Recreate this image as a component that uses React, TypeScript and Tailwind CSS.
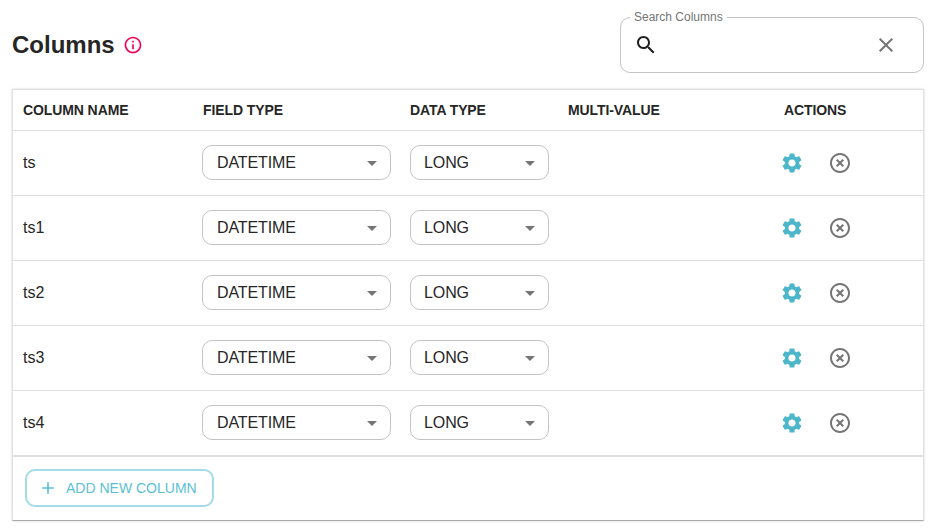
import React from "react";

const settingsPath = "M19.14 12.94c.04-.3.06-.61.06-.94 0-.32-.02-.64-.07-.94l2.03-1.58c.18-.14.23-.41.12-.61l-1.92-3.32c-.12-.22-.37-.29-.59-.22l-2.39.96c-.5-.38-1.03-.7-1.62-.94l-.36-2.54c-.04-.24-.24-.41-.48-.41h-3.84c-.24 0-.43.17-.47.41l-.36 2.54c-.59.24-1.13.57-1.62.94l-2.39-.96c-.22-.08-.47 0-.59.22L2.74 8.87c-.12.21-.08.47.12.61l2.03 1.58c-.05.3-.09.63-.09.94s.02.64.07.94l-2.03 1.58c-.18.14-.23.41-.12.61l1.92 3.32c.12.22.37.29.59.22l2.39-.96c.5.38 1.03.7 1.62.94l.36 2.54c.05.24.24.41.48.41h3.84c.24 0 .44-.17.47-.41l.36-2.54c.59-.24 1.13-.56 1.62-.94l2.39.96c.22.08.47 0 .59-.22l1.92-3.32c.12-.22.07-.47-.12-.61l-2.01-1.58zM12 15.6c-1.98 0-3.6-1.62-3.6-3.6s1.62-3.6 3.6-3.6 3.6 1.62 3.6 3.6-1.62 3.6-3.6 3.6z";
const offPath = "M14.59 8L12 10.59 9.41 8 8 9.41 10.59 12 8 14.59 9.41 16 12 13.41 14.59 16 16 14.59 13.41 12 16 9.41 14.59 8zM12 2C6.47 2 2 6.47 2 12s4.47 10 10 10 10-4.47 10-10S17.53 2 12 2zm0 18c-4.41 0-8-3.59-8-8s3.59-8 8-8 8 3.59 8 8-3.59 8-8 8z";
const infoPath = "M11 7h2v2h-2zm0 4h2v6h-2zm1-9C6.48 2 2 6.48 2 12s4.48 10 10 10 10-4.48 10-10S17.52 2 12 2zm0 18c-4.41 0-8-3.59-8-8s3.59-8 8-8 8 3.59 8 8-3.59 8-8 8z";
const searchPath = "M15.5 14h-.79l-.28-.27C15.41 12.59 16 11.11 16 9.5 16 5.91 13.09 3 9.5 3S3 5.91 3 9.5 5.91 16 9.5 16c1.61 0 3.09-.59 4.23-1.57l.27.28v.79l5 4.99L20.49 19l-4.99-5zm-6 0C7.01 14 5 11.99 5 9.5S7.01 5 9.5 5 14 7.01 14 9.5 11.99 14 9.5 14z";
const clearPath = "M19 6.41L17.59 5 12 10.59 6.41 5 5 6.41 10.59 12 5 17.59 6.41 19 12 13.41 17.59 19 19 17.59 13.41 12z";
const addPath = "M19 13h-6v6h-2v-6H5v-2h6V5h2v6h6v2z";

function Icon({ d, className }: { d: string; className: string }) {
  return (
    <svg viewBox="0 0 24 24" fill="currentColor" className={className}>
      <path d={d} />
    </svg>
  );
}

function Select({ value, width, pad }: { value: string; width: string; pad: string }) {
  return (
    <div className={`${width} ${pad} h-[35px] mb-[1px] pt-px flex items-center justify-between rounded-[10px] border border-[#c4c4c4] pr-[13px] bg-white`}>
      <span className="text-[16px] tracking-[-0.1px] text-[#262626]">{value}</span>
      <span className="w-0 h-0 border-l-[5px] border-r-[5px] border-t-[5px] border-l-transparent border-r-transparent border-t-[#757575]" />
    </div>
  );
}

const rows = ["ts", "ts1", "ts2", "ts3", "ts4"];

export default function App() {
  return (
    <div className="w-[939px] h-[532px] bg-white px-3 font-['Liberation_Sans',Arial,sans-serif] text-[#262626] overflow-hidden">
      <div className="h-[89px] w-[912px] flex items-start justify-between pt-[17px]">
        <div className="h-[56px] flex items-center gap-[8px]">
          <h1 className="text-[24px] font-bold leading-none">Columns</h1>
          <Icon d={infoPath} className="w-5 h-5 text-[#f50057]" />
        </div>
        <div className="relative w-[304px] h-[56px] rounded-[10px] border border-[#c4c4c4] flex items-center justify-between pl-[13px] pr-[25px]">
          <span className="absolute left-[9px] top-[-7px] bg-white px-[4px] text-[12px] leading-[12px] text-[#757575]">Search Columns</span>
          <Icon d={searchPath} className="w-[24px] h-[24px] text-[#1f1f1f]" />
          <Icon d={clearPath} className="w-[24px] h-[24px] text-[#757575]" />
        </div>
      </div>
      <div className="w-[912px] h-[432px] border border-[#e0e0e0] border-b-[#a8a8a8] shadow-[0_0_2px_rgba(0,0,0,0.2)] bg-white">
        <div className="h-[41px] grid grid-cols-[179px_208px_158px_1fr] items-center pl-[10px] border-b border-[#e0e0e0] text-[14px] font-bold tracking-[-0.1px]">
          <div>COLUMN NAME</div>
          <div className="pl-px">FIELD TYPE</div>
          <div>DATA TYPE</div>
          <div className="grid grid-cols-[216px_1fr]">
            <span>MULTI-VALUE</span>
            <span>ACTIONS</span>
          </div>
        </div>
        {rows.map((r, i) => (
          <div key={r} className={`${i === rows.length - 1 ? "border-b-2 h-[66px]" : "border-b h-[65px]"} grid grid-cols-[179px_208px_158px_216px_1fr] items-center pl-[10px] border-[#e0e0e0] text-[16px]`}>
            <div>{r}</div>
            <Select value="DATETIME" width="w-[189px]" pad="pl-[14px]" />
            <Select value="LONG" width="w-[139px]" pad="pl-[13px]" />
            <div />
            <div className="flex items-center gap-[24px] ml-[-4px]">
              <Icon d={settingsPath} className="w-6 h-6 text-[#4db6c9]" />
              <Icon d={offPath} className="w-6 h-6 text-[#757575]" />
            </div>
          </div>
        ))}
        <div className="h-[63px] flex items-center pl-[12px]">
          <div className="h-[38px] mb-[2px] pt-[1px] w-[189px] rounded-[10px] border-2 border-[#a3dce6] flex items-center pl-[11px] gap-[8px] text-[#5bc0d4] text-[14px]">
            <Icon d={addPath} className="w-5 h-5" />
            <span>ADD NEW COLUMN</span>
          </div>
        </div>
      </div>
    </div>
  );
}
